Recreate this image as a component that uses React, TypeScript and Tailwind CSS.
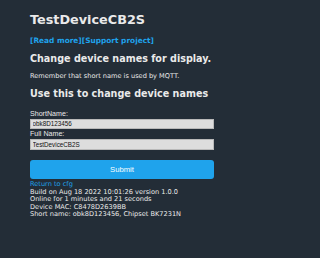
export default function App() {
  return (
    <div className="min-h-screen w-full bg-[#232d37] text-[#eaeaea] font-['DejaVu_Sans',Verdana,sans-serif]">
      <div className="ml-[30px] w-[184px] pt-[12px] pb-[20px]">
        <h1 className="whitespace-nowrap text-[12.8px] font-bold leading-[15px]">TestDeviceCB2S</h1>
        <div className="mt-[9.4px] whitespace-nowrap text-[7.4px] font-bold leading-[9px] text-[#1fa3ec]">
          <a href="#">[Read more]</a>
          <a href="#">[Support project]</a>
        </div>
        <h2 className="mt-[7.3px] whitespace-nowrap text-[9.6px] font-bold leading-[12px]">
          Change device names for display.
        </h2>
        <p className="mt-[7.5px] whitespace-nowrap text-[6.6px] leading-[8px]">
          Remember that short name is used by MQTT.
        </p>
        <h2 className="mt-[8.2px] whitespace-nowrap text-[9.6px] font-bold leading-[12px]">
          Use this to change device names
        </h2>
        <form className="font-['Liberation_Sans',Arial,sans-serif]">
          <label className="mt-[9.4px] block text-[7.1px] leading-[8px]">ShortName:</label>
          <input
            className="mt-[1.2px] block h-[10px] w-full border border-[#b9b9b9] bg-[#dddddd] px-[1.5px] text-[6.3px] text-[#111] outline-none"
            defaultValue="obk8D123456"
          />
          <label className="mt-[1.2px] block text-[7.1px] leading-[8px]">Full Name:</label>
          <input
            className="mt-[1.1px] block h-[10.4px] w-full border border-[#b9b9b9] bg-[#dddddd] px-[1.5px] text-[6.3px] text-[#111] outline-none"
            defaultValue="TestDeviceCB2S"
          />
          <button
            type="button"
            className="mt-[10.3px] block h-[19.3px] w-full rounded-[3px] bg-[#1fa3ec] text-[7.7px] text-[#faffff]"
          >
            Submit
          </button>
        </form>
        <div className="mt-[2.2px] whitespace-nowrap text-[6.6px] leading-[7.5px]">
          <a href="#" className="block text-[#1fa3ec]">Return to cfg</a>
          <div>Build on Aug 18 2022 10:01:26 version 1.0.0</div>
          <div>Online for 1 minutes and 21 seconds</div>
          <div>Device MAC: C8478D2639BB</div>
          <div>Short name: obk8D123456, Chipset BK7231N</div>
        </div>
      </div>
    </div>
  );
}
